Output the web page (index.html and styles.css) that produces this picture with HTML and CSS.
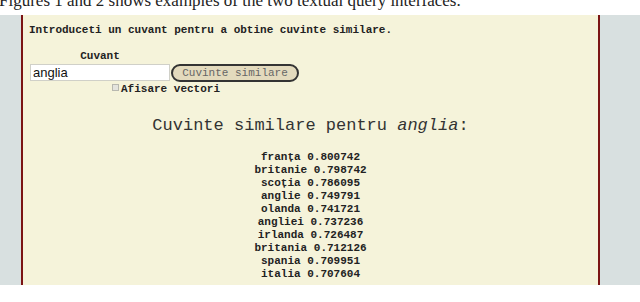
FILE: index.html
```html
<!DOCTYPE html>
<html lang="ro">
<head>
    <meta charset="UTF-8">
    <title>Cuvinte similare</title>
    <link rel="stylesheet" href="styles.css">
</head>
<body>
<div class="caption">
    <p>Figures 1 and 2 shows examples of the two textual query interfaces.</p>
</div>
<div class="frame">
    <div class="panel">
        <p class="intro">Introduceti un cuvant pentru a obtine cuvinte similare.</p>
        <form class="query" onsubmit="return false;">
            <label class="word-label" for="word">Cuvant</label>
            <input type="text" id="word" value="anglia">
            <button type="submit">Cuvinte similare</button>
            <label class="vectors"><input type="checkbox">Afisare vectori</label>
        </form>
        <h2 class="result-title">Cuvinte similare pentru <em>anglia</em>:</h2>
        <ul class="results">
            <li>franța 0.800742</li>
            <li>britanie 0.798742</li>
            <li>scoția 0.786095</li>
            <li>anglie 0.749791</li>
            <li>olanda 0.741721</li>
            <li>angliei 0.737236</li>
            <li>irlanda 0.726487</li>
            <li>britania 0.712126</li>
            <li>spania 0.709951</li>
            <li>italia 0.707604</li>
        </ul>
    </div>
</div>
</body>
</html>
```

FILE: styles.css
```css
body { margin: 0; background: #fff; }
.caption { height: 15px; overflow: hidden; }
.caption p { margin: -8px 0 0 -1px; font-family: "Liberation Serif", serif; font-size: 17px; line-height: 17px; color: #222; white-space: nowrap; }
.frame { display: flex; height: 270px; background: #d8e0e0; padding: 0 40px 0 21px; }
.panel { flex: 1; background: #f5f3da; border-left: 2px solid #7b1414; border-right: 2px solid #7b1414; padding: 9px 6px 0; font-family: "Liberation Mono", monospace; color: #222; }
.intro { margin: 0; font-size: 11px; line-height: 13px; font-weight: bold; }
.query { display: grid; grid-template-columns: 140px auto; justify-content: start; margin: 13px 0 0 1px; font-size: 11px; }
.word-label { grid-column: 1; text-align: center; font-weight: bold; line-height: 12px; margin-bottom: 2px; }
.query input[type=text] { grid-column: 1; grid-row: 2; box-sizing: border-box; width: 140px; height: 17px; margin: 0; padding: 0 2px; border: 1px solid #d0d0c8; background: #fff; font-family: "Liberation Sans", Arial, sans-serif; font-size: 13px; color: #111; }
.query button { grid-column: 2; grid-row: 2; margin: 0 0 0 1px; height: 18px; width: 128px; padding: 0; border: 2px solid #333; border-radius: 9px; background: #e3dabd; font-family: "Liberation Mono", monospace; font-size: 11px; color: #666; }
.vectors { grid-column: 1 / 3; grid-row: 3; text-align: center; font-weight: bold; line-height: 12px; margin-top: 1px; padding-left: 3px; }
.vectors input { appearance: none; -webkit-appearance: none; box-sizing: border-box; width: 7px; height: 7px; margin: 0 2px 0 0; border: 1px solid #b8b8b0; background: #e4e4de; vertical-align: 1px; }
.result-title { margin: 21px 0 0; text-align: center; font-size: 17px; line-height: 20px; font-weight: normal; color: #333; }
.result-title em { font-style: italic; }
.results { list-style: none; margin: 15px 0 0; padding: 0; text-align: center; font-size: 11px; line-height: 13px; font-weight: bold; }
```
